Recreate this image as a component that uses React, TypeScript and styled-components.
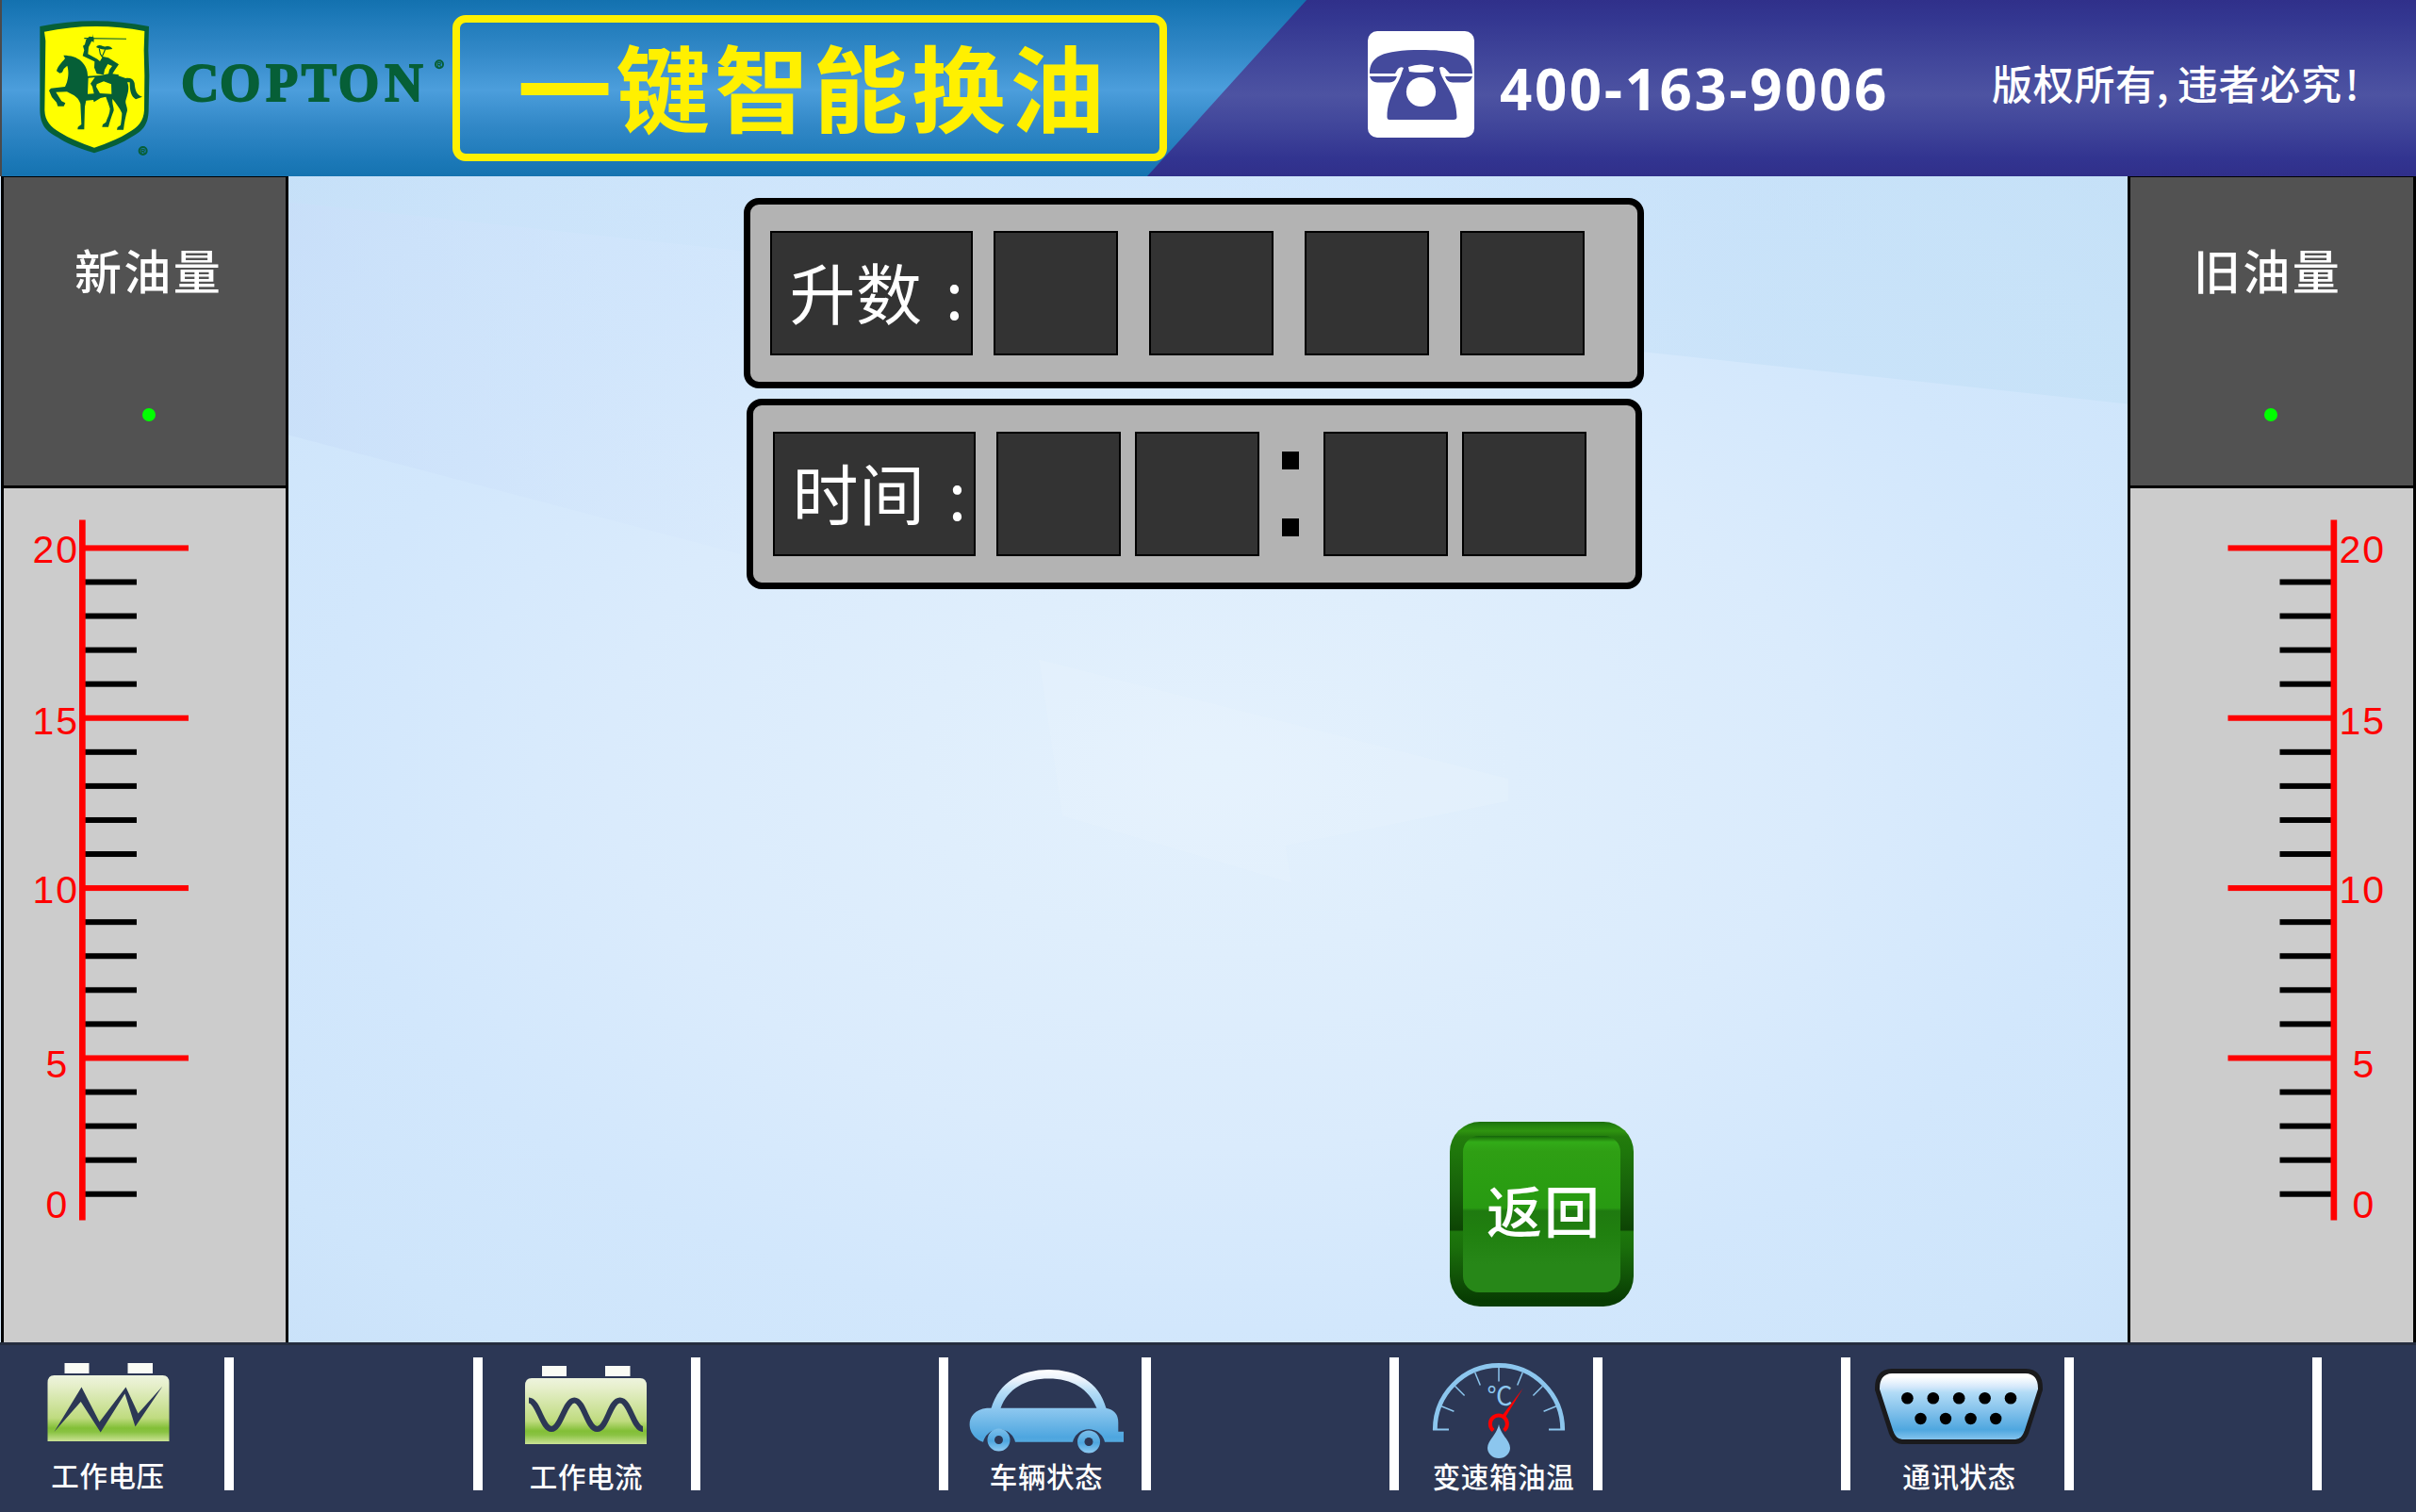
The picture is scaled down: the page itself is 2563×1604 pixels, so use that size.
import React from 'react';
import styled, { createGlobalStyle } from 'styled-components';

const CJK = `"Noto Sans CJK SC", "Noto Sans", sans-serif`;

const GlobalStyle = createGlobalStyle`
  * { box-sizing: border-box; }
  body { margin: 0; background: #2c3755; font-family: ${CJK}; }
`;

const Page = styled.div`
  display: grid;
  grid-template-rows: 187px 1237px 180px;
  width: 2563px;
  height: 1604px;
  overflow: hidden;
`;

/* ---------- header ---------- */

const Header = styled.header`
  display: flex;
  border-left: 2px solid #4a4a4c;
  background: linear-gradient(#1371af 0%, #1b78b7 8%, #3389c8 30%, #4c9edc 51%, #3389c8 70%, #1b78b7 92%, #1573b0 100%);
`;

const Brand = styled.svg`
  flex: none;
  width: 478px;
  height: 187px;
`;

const TitleFrame = styled.h1`
  position: relative;
  z-index: 1;
  flex: none;
  display: flex;
  align-items: center;
  justify-content: center;
  width: 758px;
  height: 155px;
  margin: 16px 0 0;
  padding: 0 0 7px 7px;
  border: 8px solid #fff000;
  border-radius: 14px;
  color: #fff000;
  font: 700 100px/120px ${CJK};
  letter-spacing: 4.5px;
  white-space: nowrap;
`;

const Hotline = styled.div`
  flex: none;
  display: flex;
  align-items: flex-start;
  width: 1346px;
  height: 187px;
  margin-left: -21px;
  padding-left: 234px;
  background: linear-gradient(#30308a 0%, #333690 10%, #40459a 32%, #4d53a2 54%, #40459a 72%, #323490 90%, #302f8a 100%);
  clip-path: polygon(169px 0, 100% 0, 100% 100%, 0 100%);
  color: #fff;
`;

const PhoneIcon = styled.svg`
  flex: none;
  width: 113px;
  height: 113px;
  margin-top: 33px;
`;

const PhoneNumber = styled.div`
  width: 522px;
  margin-top: 54px;
  padding-left: 27px;
  font: 700 60px/80px "Open Sans", "Noto Sans", sans-serif;
  letter-spacing: 2.6px;
  white-space: nowrap;
`;

const Copyright = styled.div`
  display: flex;
  margin-top: 57px;
  padding-left: 27px;
  font: 500 43px/60px ${CJK};
  letter-spacing: 0.7px;
  white-space: nowrap;
`;

const Punct = styled.span<{ $w: number; $pad: number }>`
  width: ${(p) => p.$w}px;
  padding-left: ${(p) => p.$pad}px;
`;

/* ---------- middle ---------- */

const Middle = styled.main`
  display: grid;
  grid-template-columns: 306px 1951px 306px;
  background: #d5e8fb;
`;

const Side = styled.aside<{ $right?: boolean }>`
  display: flex;
  flex-direction: column;
  margin: ${(p) => (p.$right ? '0' : '0 0 0 1px')};
  border: solid #000;
  border-width: 1px 3px 0 3px;
  background: #ccc;
  overflow: hidden;
`;

const SideHead = styled.div`
  flex: none;
  display: flex;
  flex-direction: column;
  align-items: center;
  height: 330px;
  padding-top: 67px;
  border-bottom: 3px solid #000;
  background: #525252;
`;

const SideTitle = styled.div<{ $shift: number }>`
  padding-left: ${(p) => Math.max(0, p.$shift)}px;
  padding-right: ${(p) => Math.max(0, -p.$shift)}px;
  color: #fff;
  font: 500 50px/60px ${CJK};
  letter-spacing: 2.3px;
`;

const Led = styled.span<{ $shift: number }>`
  width: 14px;
  height: 14px;
  margin-top: 118px;
  margin-left: ${(p) => p.$shift}px;
  border-radius: 50%;
  background: #0f0;
`;

const Ruler = styled.svg`
  flex: none;
  display: block;
  width: 299px;
  height: 907px;
`;

const Stage = styled.section`
  display: grid;
  grid-template-areas: "stack";
  overflow: hidden;
`;

const Backdrop = styled.svg`
  grid-area: stack;
  width: 1951px;
  height: 1237px;
`;

const Content = styled.div`
  grid-area: stack;
  z-index: 1;
  display: flex;
  flex-direction: column;
  align-items: flex-start;
`;

const Readout = styled.div<{ $w: number; $left: number; $top: number }>`
  display: flex;
  align-items: flex-start;
  width: ${(p) => p.$w}px;
  height: 202px;
  margin: ${(p) => p.$top}px 0 0 ${(p) => p.$left}px;
  padding: 28px 0 0 21px;
  border: 7px solid #000;
  border-radius: 16px;
  background: #b3b3b3;
`;

const Cell = styled.div<{ $gap: number }>`
  width: 132px;
  height: 132px;
  margin-left: ${(p) => p.$gap}px;
  border: 2px solid #000;
  background: #333;
`;

const LabelCell = styled(Cell)`
  display: flex;
  width: 215px;
  padding-left: 18.5px;
  color: #fff;
  font: 400 70px/123px ${CJK};
  letter-spacing: 0.6px;
  white-space: nowrap;
`;

const Colon = styled.span`
  margin-left: 24px;
`;

const Dots = styled.div`
  display: flex;
  flex-direction: column;
  gap: 52px;
  margin: 21px 0 0 23.5px;
`;

const Dot = styled.i`
  width: 18px;
  height: 19px;
  background: #000;
`;

const ReturnButton = styled.button`
  width: 195px;
  height: 196px;
  margin: 565px 0 0 1232px;
  padding: 15px 14px 15px;
  border: 0;
  border-radius: 32px;
  background: linear-gradient(#1c6f0c 0%, #23820e 2%, #2f9410 5%, #237c0d 8%, #1f780b 15%, #17600a 38%, #0d4404 58.5%, #1d780c 59.5%, #1a6f0b 68%, #115307 84%, #073b02 97%, #0a3f03 100%);
`;

const ButtonFace = styled.span`
  display: flex;
  align-items: center;
  justify-content: center;
  width: 167px;
  height: 166px;
  padding-bottom: 11px;
  padding-left: 5px;
  border-radius: 17px;
  background: linear-gradient(#14640a 0%, #26890f 2%, #32ab18 4%, #2f9f14 10%, #2b9e12 26%, #289a12 46%, #1f7a10 48%, #20800f 62%, #278718 82%, #278718 100%);
  color: #fff;
  font: 500 59px/70px ${CJK};
  letter-spacing: 2px;
`;

/* ---------- footer ---------- */

const Footer = styled.footer`
  display: flex;
  padding-top: 13px;
  border-top: 3px solid #252d3f;
  background: #2c3755;
`;

const Bar = styled.i`
  flex: none;
  width: 10px;
  height: 141px;
  background: #fff;
`;

const Slot = styled.div<{ $w: number }>`
  flex: none;
  display: flex;
  flex-direction: column;
  width: ${(p) => p.$w}px;
`;

const StatusIcon = styled.svg`
  display: block;
  height: 108px;
`;

const StatusLabel = styled.div<{ $shift: number; $drop: number }>`
  padding-left: ${(p) => Math.max(0, p.$shift * 2)}px;
  padding-right: ${(p) => Math.max(0, -p.$shift * 2)}px;
  padding-top: ${(p) => p.$drop}px;
  text-align: center;
  color: #fff;
  font: 500 29.5px/32px ${CJK};
  letter-spacing: 0.6px;
  white-space: nowrap;
`;

const GREEN = '#065f37';

function Logo() {
  return (
    <Brand viewBox="6 0 1434 561">
      <path d="M127 84Q300 50 474 84L472 160L475 240L473 350C472 400 452 418 415 438Q380 462 300 487Q218 462 185 438C148 418 128 400 127 350Z" fill={GREEN} />
      <path d="M141 101Q300 68 460 99L458 160L460 240L459 350C457 385 440 405 408 422Q375 444 300 470Q226 444 192 422C162 405 143 385 142 350L145 130Z" fill="#ff0" />
      <g fill={GREEN}>
        <path
          fillRule="evenodd"
          d="M202 176C225 176 245 182 258 194C272 207 279 222 279 242L320 240L345 235L376 241L400 249C415 247 425 252 428 264C430 285 433 302 453 308L432 316C418 308 413 292 413 262L405 262C413 280 407 298 400 320C398 330 406 340 405 352C400 370 396 388 393 413L372 413L374 405L384 398C386 385 388 372 388 360C380 342 370 330 358 315C356 330 363 342 362 352C355 370 349 388 345 404L325 404L327 396L337 389C342 375 350 362 350 346C347 334 342 322 337 308L320 312L299 325L297 318L274 320L270 340L268 412L247 412L248 404L259 396L256 330C252 318 245 310 236 304L213 292L178 293L196 322L208 328L203 338L184 338L180 326L165 309L156 288L162 281L207 276L213 262C217 245 220 230 214 209L203 219L198 230L190 233L180 226C184 210 194 202 207 186ZM281 248L302 246L288 266L294 276L299 298L279 299ZM308 268L330 259L354 268L355 299L318 297L306 276Z"
        />
        <path d="M263 178L268 160L264 146L270 142L274 126L284 116L298 118L299 129L291 132L282 150L280 172L310 188L318 195L327 180L345 184L378 205L366 222L358 235L378 238L376 243L344 240L348 222L357 210L343 204L333 222L330 238L308 235L300 215L301 196Z" />
        <path d="M306 150Q310 142 322 145Q330 150 342 147Q353 147 358 156L340 158Q322 158 314 154Z" />
        <path d="M316 155L319 171L325 181L335 157" fill="none" stroke={GREEN} strokeWidth="3.5" />
        <path d="M268 120L402 122.5V125L268 123.5ZM294 108L299 135L294 132Z" />
      </g>
      <g fill="none" stroke={GREEN} strokeWidth="6">
        <circle cx="455" cy="480" r="12" />
        <circle cx="1398" cy="205" r="12" />
      </g>
      <g fill={GREEN} stroke={GREEN} strokeWidth="1" fontFamily="Liberation Sans, sans-serif" fontWeight="700" fontSize="21" textAnchor="middle">
        <text x="455" y="487.5">R</text>
        <text x="1398" y="212.5">R</text>
      </g>
      <text
        x="576 699 846 959 1076 1225"
        y="319.500"
        fill={GREEN}
        stroke={GREEN}
        strokeWidth="5.500"
        fontFamily="Liberation Serif, serif"
        fontWeight="700"
        fontSize="168"
      >
        COPTON
      </text>
    </Brand>
  );
}

function Telephone() {
  return (
    <PhoneIcon viewBox="1451 33 113 113">
      <rect x="1451" y="33" width="113" height="113" rx="10" fill="#fff" />
      <g fill="#444a9c">
        <path d="M1453 78C1453 60 1466 53 1507.5 53S1562 60 1562 78H1538L1533 72.5Q1529 70 1527 72L1528 77C1532 90 1545 100 1545.500 124Q1545.500 127 1542 127H1474Q1471.500 127 1471.500 124C1472 100 1484 90 1487 77L1489 72Q1486 70 1483 73L1480 78Z" />
        <path d="M1453 81H1482Q1480 87.500 1474 87.500H1461Q1455 87.500 1453 81Z" />
        <path d="M1562 81H1533Q1535 87.500 1541 87.500H1554Q1560 87.500 1562 81Z" />
      </g>
      <path d="M1494 71Q1507.500 66 1521 71L1520 76Q1507.500 78 1495 76Z" fill="#fff" />
      <circle cx="1507.500" cy="97.500" r="15.600" fill="#fff" />
    </PhoneIcon>
  );
}

const TICKS = Array.from({ length: 20 }, (_, i) => i);

function Scale({ right }: { right?: boolean }) {
  const labels: [string, number][] = [['20', 597], ['15', 778.5], ['10', 958], ['5', 1142.5], ['0', 1292]];
  const axis = right ? 2472.5 : 84;
  return (
    <Ruler viewBox={`${right ? 2260 : 4} 518 299 907`}>
      {TICKS.map((i) => {
        const major = i % 5 === 0;
        const len = major ? 110 : 55;
        return (
          <rect
            key={i}
            x={right ? 2473.5 - len : 90}
            y={578.4 + i * 36.07}
            width={len}
            height={6}
            fill={major ? '#f00' : '#000'}
          />
        );
      })}
      <rect x={axis} y={551.5} width={6.7} height={743} fill="#f00" />
      <g fill="#f00" fontFamily="Liberation Sans, Arial, sans-serif" fontSize="41" letterSpacing="2">
        {labels.map(([t, y]) => (
          <text key={t} x={right ? (t.length > 1 ? 2481.5 : 2495.5) : t.length > 1 ? 34.5 : 48.5} y={y}>
            {t}
          </text>
        ))}
      </g>
    </Ruler>
  );
}

function Background() {
  return (
    <Backdrop viewBox="0 0 1568 1568" preserveAspectRatio="none">
      <defs>
        <radialGradient id="glow" gradientUnits="userSpaceOnUse" cx="790" cy="790" r="1150">
          <stop offset="0" stopColor="#e4f1fd" />
          <stop offset="0.22" stopColor="#dfeefc" />
          <stop offset="0.45" stopColor="#daebfc" />
          <stop offset="0.66" stopColor="#d2e7fc" />
          <stop offset="0.85" stopColor="#cee5fb" />
          <stop offset="1" stopColor="#c9e1f9" />
        </radialGradient>
        <linearGradient id="shade" x1="0" x2="1" y1="0" y2="0">
          <stop offset="0" stopColor="#c0def6" stopOpacity="0.4" />
          <stop offset="0.25" stopColor="#c8e1f9" stopOpacity="0.2" />
          <stop offset="0.5" stopColor="#c8e1f9" stopOpacity="0.2" />
          <stop offset="0.8" stopColor="#c2dff7" stopOpacity="0.55" />
          <stop offset="1" stopColor="#c2e0f6" stopOpacity="0.6" />
        </linearGradient>
        <linearGradient id="corner" x1="0" x2="1" y1="0" y2="0">
          <stop offset="0" stopColor="#c6dcf8" stopOpacity="0.55" />
          <stop offset="1" stopColor="#d4e6fc" stopOpacity="0.25" />
        </linearGradient>
      </defs>
      <rect width="1568" height="1568" fill="url(#glow)" />
      <path d="M0 0H1568V306L1160 237L385 100L0 35Z" fill="url(#shade)" />
      <path d="M0 35L385 100V508L0 348Z" fill="url(#corner)" />
      <path d="M640 650L1040 810L1040 840L850 900L855 950L660 860Z" fill="#e8f3fd" fillOpacity="0.35" />
    </Backdrop>
  );
}

function Battery({ id, x, y, children }: { id: string; x: number; y: number; children: React.ReactNode }) {
  return (
    <>
      <defs>
        <linearGradient id={id} x1="0" x2="0" y1="0" y2="1">
          <stop offset="0" stopColor="#eef4de" />
          <stop offset="0.15" stopColor="#e6efcb" />
          <stop offset="0.65" stopColor="#bfdb7f" />
          <stop offset="0.8" stopColor="#82bf36" />
          <stop offset="0.86" stopColor="#8ac343" />
          <stop offset="1" stopColor="#cbe295" />
        </linearGradient>
      </defs>
      <rect x={x + 18} y={y - 13} width="26" height="11" fill="#fafbf5" />
      <rect x={x + 85} y={y - 13} width="26.500" height="11" fill="#fafbf5" />
      <path d={`M${x} ${y + 70}V${y + 8}Q${x} ${y} ${x + 7} ${y}H${x + 122}Q${x + 129} ${y} ${x + 129} ${y + 8}V${y + 70}Z`} fill={`url(#${id})`} />
      {children}
    </>
  );
}

const VoltageIcon = () => (
  <StatusIcon viewBox="0 1440 238 108" width="238">
    <Battery id="b1" x={50.5} y={1459}>
      <path d="M57.500 1519L86.500 1471.500L105.500 1508.500L133.500 1471.500L146.500 1499.500L172.500 1470.500L143.500 1513.500L132.500 1478.500L106.700 1519.500L85.700 1487Z" fill="#2c3755" />
    </Battery>
  </StatusIcon>
);

const CurrentIcon = () => (
  <StatusIcon viewBox="512 1440 221 108" width="221">
    <Battery id="b2" x={557} y={1462}>
      <path d="M561 1485.500C571 1485.500 575 1516 585 1516S599 1485.500 609.300 1485.500S623 1516 633.500 1516S647 1485.500 657.700 1485.500S672 1516 682 1516" fill="none" stroke="#2c3755" strokeWidth="6" />
    </Battery>
  </StatusIcon>
);

const CarIcon = () => (
  <StatusIcon viewBox="1006 1440 205 108" width="205">
    <defs>
      <linearGradient id="roof" gradientUnits="userSpaceOnUse" x1="0" x2="0" y1="1453" y2="1530">
        <stop offset="0" stopColor="#fff" />
        <stop offset="0.15" stopColor="#e8f1fb" />
        <stop offset="0.3" stopColor="#b7def7" />
        <stop offset="0.52" stopColor="#90c9f0" />
        <stop offset="0.93" stopColor="#4ea6df" />
        <stop offset="1" stopColor="#55aae0" />
      </linearGradient>
      <linearGradient id="wheel" x1="0" x2="0" y1="0" y2="1">
        <stop offset="0" stopColor="#7cbfeb" />
        <stop offset="0.55" stopColor="#4ea6df" />
        <stop offset="1" stopColor="#8ecaf2" />
      </linearGradient>
    </defs>
    <path fill="url(#roof)" d="M1051.500 1494C1060 1466 1083 1453 1112.500 1453S1166 1466 1173.500 1494H1163.500C1155 1473 1137 1462.500 1112.500 1462.500S1069 1473 1061.500 1494Z" />
    <path fill="url(#roof)" d="M1047 1493.700H1173Q1186.300 1496 1186.300 1509V1518.700H1192V1529.700H1172A17.500 17.500 0 0 0 1138 1529.700H1077A17.500 17.500 0 0 0 1043 1529.700C1034 1527 1028.600 1519 1028.600 1511S1034 1495 1047 1493.700Z" />
    <circle cx="1059.500" cy="1527.500" r="12" fill="url(#wheel)" />
    <circle cx="1155" cy="1529.500" r="12" fill="url(#wheel)" />
    <circle cx="1059.500" cy="1527.500" r="4.500" fill="#2c3755" />
    <circle cx="1155" cy="1529.500" r="4.500" fill="#2c3755" />
  </StatusIcon>
);

const OilTempIcon = () => (
  <StatusIcon viewBox="1484 1440 206 108" width="206">
    <g stroke="#8cc6ee" fill="none">
      <path d="M1522.300 1517A67.700 68.500 0 0 1 1657.700 1517" strokeWidth="4.800" />
      {[22.5, 45, 67.5, 90, 112.5, 135, 157.5].map((a) => {
        const c = Math.cos((a * Math.PI) / 180);
        const s = Math.sin((a * Math.PI) / 180);
        return (
          <line key={a} x1={1590 + 66 * c} y1={1517 - 66 * s} x2={1590 + 51.5 * c} y2={1517 - 51.5 * s} strokeWidth="1.500" />
        );
      })}
      <path d="M1520 1516.500H1537M1643 1516.500H1660" strokeWidth="1.800" />
    </g>
    <text x="1577.500" y="1491" fill="#8cc6ee" fontFamily="Noto Sans CJK SC, sans-serif" fontSize="27">
      ℃
    </text>
    <path d="M1584.200 1517.500A9 9 0 1 1 1595.500 1517.500" fill="none" stroke="#f00" strokeWidth="4" />
    <path d="M1615.800 1472.500L1597 1503.500L1593 1502.500Z" fill="#f00" />
    <path d="M1590 1511C1592 1522 1602 1528 1602 1536A12 11 0 0 1 1578 1536C1578 1528 1588 1522 1590 1511Z" fill="#8cc6ee" />
  </StatusIcon>
);

const PortIcon = () => (
  <StatusIcon viewBox="1963 1440 227 108" width="227">
    <defs>
      <linearGradient id="port" x1="0" x2="0" y1="0" y2="1">
        <stop offset="0" stopColor="#fff" />
        <stop offset="0.08" stopColor="#fff" />
        <stop offset="0.22" stopColor="#d6e9fb" />
        <stop offset="0.3" stopColor="#b3dcf6" />
        <stop offset="0.55" stopColor="#86c3ec" />
        <stop offset="0.83" stopColor="#4fa7df" />
        <stop offset="1" stopColor="#90caf1" />
      </linearGradient>
    </defs>
    <path d="M2007 1454.500H2149Q2165 1455 2164.500 1474L2150 1519Q2146 1529.500 2138 1529.500H2018Q2010 1529.500 2006 1519L1991.500 1474Q1991 1455 2007 1454.500Z" fill="url(#port)" stroke="#1a1a1c" strokeWidth="5" />
    {[2023.4, 2050.8, 2078.2, 2105.6, 2133].map((x) => (
      <circle key={x} cx={x} cy="1483.300" r="6.300" />
    ))}
    {[2037.5, 2064, 2090.6, 2117.2].map((x) => (
      <circle key={x} cx={x} cy="1505" r="6.200" />
    ))}
  </StatusIcon>
);

export default function App() {
  return (
    <>
      <GlobalStyle />
      <Page>
        <Header>
          <Logo />
          <TitleFrame>一键智能换油</TitleFrame>
          <Hotline>
            <Telephone />
            <PhoneNumber>400-163-9006</PhoneNumber>
            <Copyright>
              版权所有<Punct $w={22} $pad={0}>,</Punct>违者必究<Punct $w={22} $pad={3}>!</Punct>
            </Copyright>
          </Hotline>
        </Header>

        <Middle>
          <Side>
            <SideHead>
              <SideTitle $shift={8}>新油量</SideTitle>
              <Led $shift={8} />
            </SideHead>
            <Scale />
          </Side>

          <Stage>
            <Background />
            <Content>
              <Readout $w={955} $left={483} $top={23}>
                <LabelCell $gap={0}>升数<Colon>:</Colon></LabelCell>
                <Cell $gap={21.5} />
                <Cell $gap={33.3} />
                <Cell $gap={33.3} />
                <Cell $gap={33.3} />
              </Readout>
              <Readout $w={950} $left={486} $top={11}>
                <LabelCell $gap={0}>时间<Colon>:</Colon></LabelCell>
                <Cell $gap={21.5} />
                <Cell $gap={15.7} />
                <Dots>
                  <Dot />
                  <Dot />
                </Dots>
                <Cell $gap={26} />
                <Cell $gap={15.7} />
              </Readout>
              <ReturnButton>
                <ButtonFace>返回</ButtonFace>
              </ReturnButton>
            </Content>
          </Stage>

          <Side $right>
            <SideHead>
              <SideTitle $shift={-9}>旧油量</SideTitle>
              <Led $shift={-3} />
            </SideHead>
            <Scale right />
          </Side>
        </Middle>

        <Footer>
          <Slot $w={238}>
            <VoltageIcon />
            <StatusLabel $shift={-4.5} $drop={0}>工作电压</StatusLabel>
          </Slot>
          <Bar />
          <Slot $w={254} />
          <Bar />
          <Slot $w={221}>
            <CurrentIcon />
            <StatusLabel $shift={-0.5} $drop={0.5}>工作电流</StatusLabel>
          </Slot>
          <Bar />
          <Slot $w={253} />
          <Bar />
          <Slot $w={205}>
            <CarIcon />
            <StatusLabel $shift={1.5} $drop={0.5}>车辆状态</StatusLabel>
          </Slot>
          <Bar />
          <Slot $w={253} />
          <Bar />
          <Slot $w={206}>
            <OilTempIcon />
            <StatusLabel $shift={8} $drop={0.5}>变速箱油温</StatusLabel>
          </Slot>
          <Bar />
          <Slot $w={253} />
          <Bar />
          <Slot $w={227}>
            <PortIcon />
            <StatusLabel $shift={2} $drop={0.5}>通讯状态</StatusLabel>
          </Slot>
          <Bar />
          <Slot $w={253} />
          <Bar />
        </Footer>
      </Page>
    </>
  );
}
